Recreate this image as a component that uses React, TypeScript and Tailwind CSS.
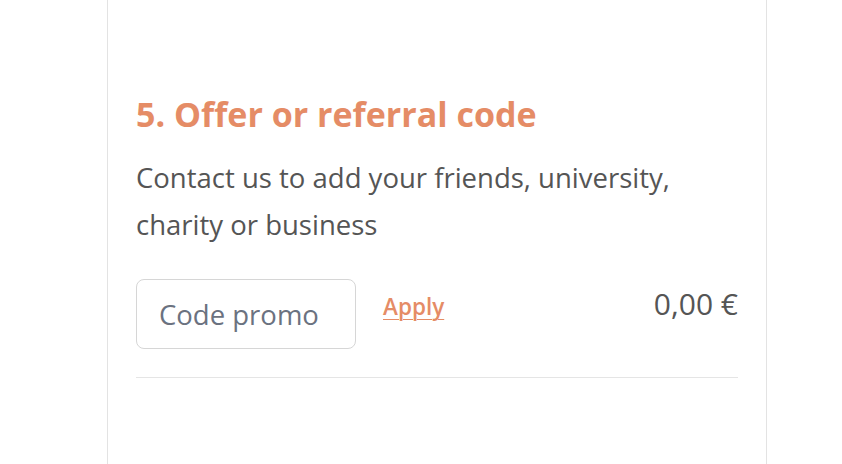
export default function App() {
  return (
    <div className="w-[842px] h-[464px] bg-white overflow-hidden" style={{ fontFamily: "'Open Sans', sans-serif" }}>
      <div className="ml-[107px] w-[660px] h-full border-x border-[#e3e3e3] px-[28px] pt-[90px]">
        <h2 className="text-[34px] leading-[48px] font-bold text-[#e58c66]">5. Offer or referral code</h2>
        <p className="mt-[16px] text-[27.5px] leading-[47px] text-[#555555]">
          Contact us to add your friends, university,
          <br />
          charity or business
        </p>
        <div className="mt-[31px] flex items-start">
          <input
            type="text"
            placeholder="Code promo"
            className="w-[220px] h-[70px] rounded-[8px] border border-[#d6d6d6] px-[22px] text-[27.5px] text-[#555] placeholder:text-[#6b7280] outline-none"
          />
          <a href="#" className="ml-[27px] mt-[11px] text-[22.5px] font-semibold text-[#e58c66] underline decoration-1 underline-offset-4">Apply</a>
          <span className="ml-auto mt-[2px] text-[30px] text-[#555555]">0,00 €</span>
        </div>
        <div className="mt-[28px] border-t border-[#e5e5e5]" />
      </div>
    </div>
  );
}
